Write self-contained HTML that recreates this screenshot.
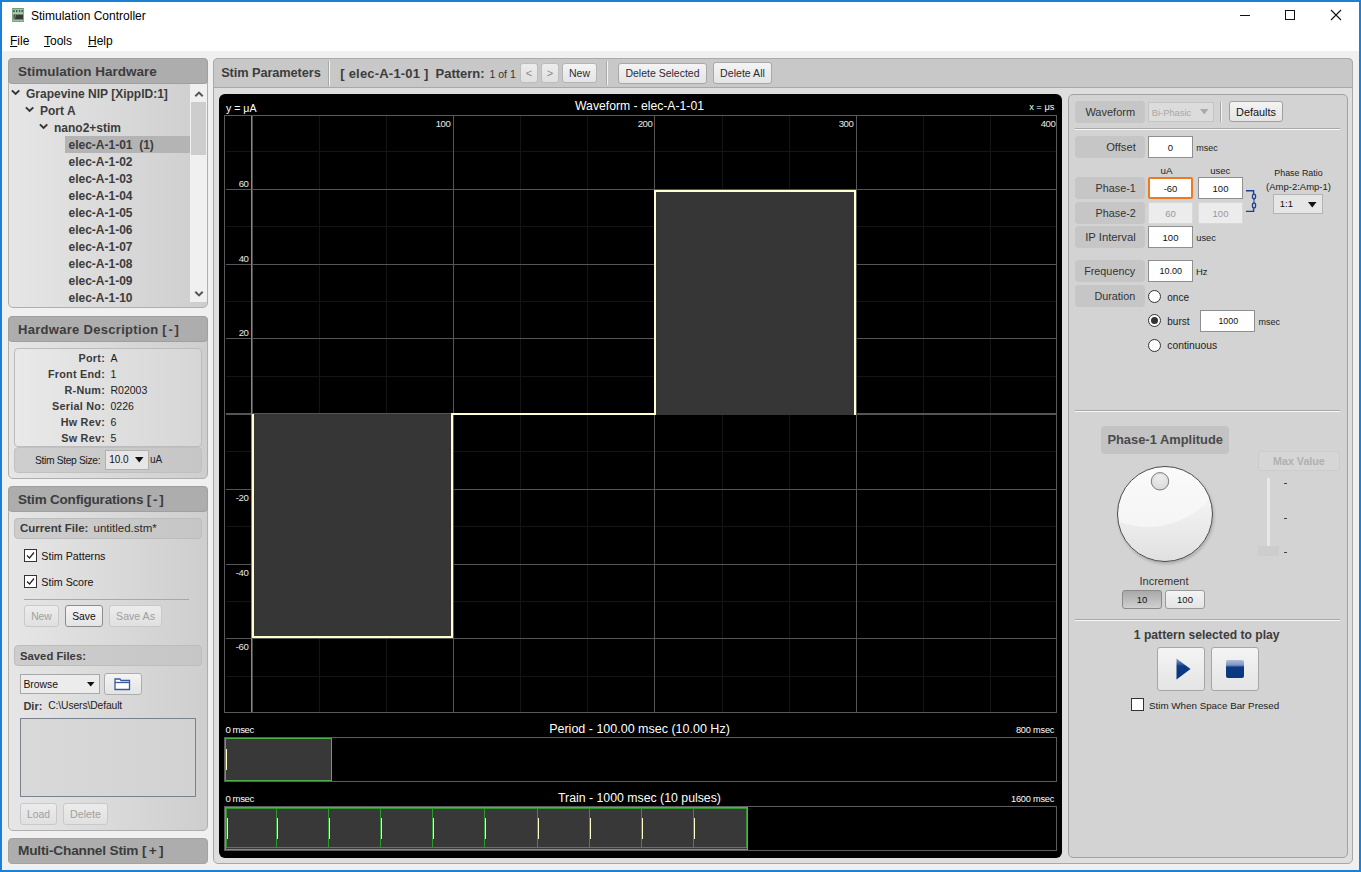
<!DOCTYPE html><html><head><meta charset="utf-8"><style>
*{box-sizing:border-box;margin:0;padding:0}
html,body{width:1361px;height:872px;overflow:hidden;background:#f0f0f0;font-family:"Liberation Sans",sans-serif;color:#222}
.a{position:absolute}
.t{position:absolute;white-space:pre;line-height:1}
</style></head><body>
<div class="a" style="left:2px;top:2px;width:1357px;height:49px;background:#fff"></div>
<svg class="a" style="left:12px;top:8px" width="12" height="14"><rect x="0" y="0" width="12" height="14" fill="#a6cfae"/><rect x="0" y="0" width="12" height="1.2" fill="#6f9a7a"/><rect x="0" y="12.8" width="12" height="1.2" fill="#7aa585"/><rect x="0" y="0" width="1" height="14" fill="#7fa98a"/><rect x="11" y="0" width="1" height="14" fill="#7fa98a"/><rect x="1.2" y="2" width="1.6" height="2.2" fill="#4a5a50"/><rect x="4" y="2" width="1.4" height="2.2" fill="#4a5a50"/><rect x="6.8" y="2" width="1.4" height="2.2" fill="#4a5a50"/><rect x="9.3" y="2" width="1.6" height="2.2" fill="#4a5a50"/><rect x="1.5" y="6.5" width="9.5" height="5" fill="#3a3a3a"/><path d="M2.3 11.5L3.6 7" stroke="#9a9a9a" stroke-width="0.8"/></svg>
<div class="t" style="left:31px;top:9.84px;font-size:12px;font-weight:400;color:#000;">Stimulation Controller</div>
<div class="a" style="left:1240px;top:15px;width:10px;height:1px;background:#111"></div>
<div class="a" style="left:1285px;top:10px;width:10px;height:10px;border:1px solid #111"></div>
<svg class="a" style="left:1330px;top:9px" width="12" height="12"><path d="M1 1L11 11M11 1L1 11" stroke="#111" stroke-width="1.1"/></svg>
<div class="t" style="left:10px;top:34.54px;font-size:12px;font-weight:400;color:#000;"><u>F</u>ile</div>
<div class="t" style="left:44px;top:34.54px;font-size:12px;font-weight:400;color:#000;"><u>T</u>ools</div>
<div class="t" style="left:88px;top:34.54px;font-size:12px;font-weight:400;color:#000;"><u>H</u>elp</div>
<div class="a" style="left:8px;top:58px;width:200px;height:250px;border:1px solid #afafaf;border-radius:5px;background:linear-gradient(90deg,#e6e6e6,#cecece);"></div>
<div class="a" style="left:8px;top:58px;width:200px;height:26px;background:#adadad;border:1px solid #a0a0a0;border-radius:4px;"></div>
<div class="t" style="left:18px;top:64.87px;font-size:13.5px;font-weight:700;color:#3c3c3c;">Stimulation Hardware</div>
<div class="a" style="left:190px;top:84px;width:17px;height:218px;background:#f0f0f0"></div>
<div class="a" style="left:191px;top:102px;width:15px;height:53px;background:#cdcdcd"></div>
<svg class="a" style="left:194px;top:90px" width="10" height="8"><path d="M1.3 6.3L5 2.6L8.7 6.3" stroke="#555" stroke-width="2" fill="none"/></svg>
<svg class="a" style="left:194px;top:290px" width="10" height="8"><path d="M1.3 1.7L5 5.4L8.7 1.7" stroke="#555" stroke-width="2" fill="none"/></svg>
<div class="a" style="left:65px;top:136px;width:125px;height:17px;background:#b4b4b4"></div>
<div class="t" style="left:26px;top:87.74px;font-size:12px;font-weight:700;color:#3c3c3c;">Grapevine NIP [XippID:1]</div>
<svg class="a" style="left:11px;top:89.30px" width="10" height="8"><path d="M0.9 1.3L4.6 5L8.3 1.3" stroke="#333" stroke-width="1.9" fill="none"/></svg>
<div class="t" style="left:40px;top:104.74px;font-size:12px;font-weight:700;color:#3c3c3c;">Port A</div>
<svg class="a" style="left:25px;top:106.30px" width="10" height="8"><path d="M0.9 1.3L4.6 5L8.3 1.3" stroke="#333" stroke-width="1.9" fill="none"/></svg>
<div class="t" style="left:54px;top:121.74px;font-size:12px;font-weight:700;color:#3c3c3c;">nano2+stim</div>
<svg class="a" style="left:39px;top:123.30px" width="10" height="8"><path d="M0.9 1.3L4.6 5L8.3 1.3" stroke="#333" stroke-width="1.9" fill="none"/></svg>
<div class="t" style="left:68.5px;top:138.74px;font-size:12px;font-weight:700;color:#3c3c3c;">elec-A-1-01  (1)</div>
<div class="t" style="left:68.5px;top:155.74px;font-size:12px;font-weight:700;color:#3c3c3c;">elec-A-1-02</div>
<div class="t" style="left:68.5px;top:172.74px;font-size:12px;font-weight:700;color:#3c3c3c;">elec-A-1-03</div>
<div class="t" style="left:68.5px;top:189.74px;font-size:12px;font-weight:700;color:#3c3c3c;">elec-A-1-04</div>
<div class="t" style="left:68.5px;top:206.74px;font-size:12px;font-weight:700;color:#3c3c3c;">elec-A-1-05</div>
<div class="t" style="left:68.5px;top:223.74px;font-size:12px;font-weight:700;color:#3c3c3c;">elec-A-1-06</div>
<div class="t" style="left:68.5px;top:240.74px;font-size:12px;font-weight:700;color:#3c3c3c;">elec-A-1-07</div>
<div class="t" style="left:68.5px;top:257.74px;font-size:12px;font-weight:700;color:#3c3c3c;">elec-A-1-08</div>
<div class="t" style="left:68.5px;top:274.74px;font-size:12px;font-weight:700;color:#3c3c3c;">elec-A-1-09</div>
<div class="t" style="left:68.5px;top:291.74px;font-size:12px;font-weight:700;color:#3c3c3c;">elec-A-1-10</div>
<div class="a" style="left:8px;top:316px;width:200px;height:163px;border:1px solid #afafaf;border-radius:5px;background:linear-gradient(90deg,#e6e6e6,#cecece);"></div>
<div class="a" style="left:8px;top:316px;width:200px;height:26px;background:#adadad;border:1px solid #a0a0a0;border-radius:4px;"></div>
<div class="t" style="left:18px;top:322.80px;font-size:13px;font-weight:700;color:#3c3c3c;letter-spacing:0.3px">Hardware Description <span style="letter-spacing:1.8px">[-</span>]</div>
<div class="a" style="left:14px;top:348px;width:188px;height:99px;border:1px solid #bcbcbc;border-radius:4px;background:linear-gradient(90deg,#e9e9e9,#d6d6d6)"></div>
<div class="a" style="left:14px;top:447px;width:188px;height:26px;border:1px solid #c0c0c0;border-radius:4px;background:linear-gradient(90deg,#cecece,#c6c6c6)"></div>
<div class="t" style="left:5px;width:100px;text-align:right;top:352.66px;font-size:10.8px;font-weight:700;color:#3a3a3a;letter-spacing:0.25px">Port:</div>
<div class="t" style="left:110.5px;top:352.91px;font-size:10.5px;font-weight:400;color:#1a1a1a;">A</div>
<div class="t" style="left:5px;width:100px;text-align:right;top:368.64px;font-size:10.8px;font-weight:700;color:#3a3a3a;letter-spacing:0.25px">Front End:</div>
<div class="t" style="left:110.5px;top:368.89px;font-size:10.5px;font-weight:400;color:#1a1a1a;">1</div>
<div class="t" style="left:5px;width:100px;text-align:right;top:384.62px;font-size:10.8px;font-weight:700;color:#3a3a3a;letter-spacing:0.25px">R-Num:</div>
<div class="t" style="left:110.5px;top:384.87px;font-size:10.5px;font-weight:400;color:#1a1a1a;">R02003</div>
<div class="t" style="left:5px;width:100px;text-align:right;top:400.60px;font-size:10.8px;font-weight:700;color:#3a3a3a;letter-spacing:0.25px">Serial No:</div>
<div class="t" style="left:110.5px;top:400.85px;font-size:10.5px;font-weight:400;color:#1a1a1a;">0226</div>
<div class="t" style="left:5px;width:100px;text-align:right;top:416.58px;font-size:10.8px;font-weight:700;color:#3a3a3a;letter-spacing:0.25px">Hw Rev:</div>
<div class="t" style="left:110.5px;top:416.83px;font-size:10.5px;font-weight:400;color:#1a1a1a;">6</div>
<div class="t" style="left:5px;width:100px;text-align:right;top:432.56px;font-size:10.8px;font-weight:700;color:#3a3a3a;letter-spacing:0.25px">Sw Rev:</div>
<div class="t" style="left:110.5px;top:432.81px;font-size:10.5px;font-weight:400;color:#1a1a1a;">5</div>
<div class="t" style="left:35px;top:455.88px;font-size:10.3px;font-weight:400;color:#1a1a1a;letter-spacing:-0.35px">Stim Step Size:</div>
<div class="a" style="left:105px;top:450px;width:44px;height:20px;background:#e6e6e6;border:1px solid #b0b0b0"></div>
<div class="t" style="left:109.2px;top:454.84px;font-size:10px;font-weight:400;color:#111;">10.0</div>
<svg class="a" style="left:135px;top:457px" width="9" height="6"><path d="M0 0H8.5L4.25 5.5Z" fill="#111"/></svg>
<div class="t" style="left:150px;top:455.04px;font-size:10px;font-weight:400;color:#222;">uA</div>
<div class="a" style="left:8px;top:486px;width:200px;height:345px;border:1px solid #afafaf;border-radius:5px;background:linear-gradient(90deg,#e6e6e6,#cecece);"></div>
<div class="a" style="left:8px;top:486px;width:200px;height:26px;background:#adadad;border:1px solid #a0a0a0;border-radius:4px;"></div>
<div class="t" style="left:18px;top:492.97px;font-size:13.5px;font-weight:700;color:#3c3c3c;letter-spacing:-0.2px">Stim Configurations <span style="letter-spacing:1.8px">[-</span>]</div>
<div class="a" style="left:14px;top:518px;width:188px;height:21px;border:1px solid #bdbdbd;border-radius:4px;background:linear-gradient(90deg,#cdcdcd,#c6c6c6)"></div>
<div class="t" style="left:20px;top:523.27px;font-size:11.5px;font-weight:700;color:#3a3a3a;">Current File:</div>
<div class="t" style="left:93.5px;top:523.27px;font-size:11.5px;font-weight:400;color:#2a2a2a;">untitled.stm*</div>
<div class="a" style="left:24px;top:549px;width:13px;height:13px;background:#fff;border:1px solid #333"></div>
<svg class="a" style="left:25px;top:550px" width="11" height="11"><path d="M2 5.5L4.5 8L9 2.5" stroke="#222" stroke-width="1.2" fill="none"/></svg>
<div class="t" style="left:41.3px;top:550.94px;font-size:10.7px;font-weight:400;color:#111;">Stim Patterns</div>
<div class="a" style="left:24px;top:575px;width:13px;height:13px;background:#fff;border:1px solid #333"></div>
<svg class="a" style="left:25px;top:576px" width="11" height="11"><path d="M2 5.5L4.5 8L9 2.5" stroke="#222" stroke-width="1.2" fill="none"/></svg>
<div class="t" style="left:41.3px;top:576.94px;font-size:10.7px;font-weight:400;color:#111;">Stim Score</div>
<div class="a" style="left:24px;top:599px;width:165px;height:1px;background:#a8a8a8"></div>
<div class="a" style="left:24px;top:605px;width:35px;height:22px;border:1px solid #c9c9c9;border-radius:3px;background:linear-gradient(#ececec,#e0e0e0);"></div>
<div class="t" style="left:21.5px;width:40px;text-align:center;top:611.68px;font-size:10.3px;font-weight:400;color:#a0a0a0;">New</div>
<div class="a" style="left:65px;top:605px;width:38px;height:22px;border:1px solid #adadad;border-radius:3px;background:linear-gradient(#f4f4f4,#e4e4e4);border-color:#8c8c8c"></div>
<div class="t" style="left:64.0px;width:40px;text-align:center;top:611.68px;font-size:10.3px;font-weight:400;color:#111;">Save</div>
<div class="a" style="left:109px;top:605px;width:53px;height:22px;border:1px solid #c9c9c9;border-radius:3px;background:linear-gradient(#ececec,#e0e0e0);"></div>
<div class="t" style="left:105.5px;width:60px;text-align:center;top:611.43px;font-size:10.6px;font-weight:400;color:#a0a0a0;">Save As</div>
<div class="a" style="left:14px;top:645px;width:188px;height:21px;border:1px solid #bdbdbd;border-radius:4px;background:linear-gradient(90deg,#cdcdcd,#c6c6c6)"></div>
<div class="t" style="left:20px;top:650.63px;font-size:11.3px;font-weight:700;color:#3a3a3a;">Saved Files:</div>
<div class="a" style="left:20px;top:674px;width:80px;height:20px;background:#ececec;border:1px solid #a8a8a8"></div>
<div class="t" style="left:23.4px;top:680.00px;font-size:10.4px;font-weight:400;color:#111;">Browse</div>
<svg class="a" style="left:87px;top:682px" width="8" height="5"><path d="M0 0H7.5L3.75 4.5Z" fill="#111"/></svg>
<div class="a" style="left:104px;top:673px;width:38px;height:22px;border:1px solid #adadad;border-radius:3px;background:linear-gradient(#f4f4f4,#e4e4e4);"></div>
<svg class="a" style="left:114px;top:677px" width="17" height="14"><path d="M1 2H6L7 3.5H15.5V12.5H1Z" fill="#fff" stroke="#3a5a9a" stroke-width="1.3"/><path d="M1 5.5H15.5" stroke="#3a5a9a" stroke-width="1.3"/></svg>
<div class="t" style="left:23.4px;top:700.69px;font-size:11px;font-weight:700;color:#3a3a3a;">Dir:</div>
<div class="t" style="left:48.2px;top:700.88px;font-size:10.3px;font-weight:400;color:#222;letter-spacing:-0.1px">C:\Users\Default</div>
<div class="a" style="left:20px;top:718px;width:176px;height:79px;border:1px solid #7a8290;background:linear-gradient(90deg,#d9d9d9,#d2d2d2)"></div>
<div class="a" style="left:20px;top:803px;width:37px;height:22px;border:1px solid #c9c9c9;border-radius:3px;background:linear-gradient(#ececec,#e0e0e0);"></div>
<div class="t" style="left:18.5px;width:40px;text-align:center;top:809.78px;font-size:10.3px;font-weight:400;color:#a0a0a0;">Load</div>
<div class="a" style="left:63px;top:803px;width:45px;height:22px;border:1px solid #c9c9c9;border-radius:3px;background:linear-gradient(#ececec,#e0e0e0);"></div>
<div class="t" style="left:60.5px;width:50px;text-align:center;top:809.44px;font-size:10.7px;font-weight:400;color:#a0a0a0;">Delete</div>
<div class="a" style="left:8px;top:838px;width:200px;height:26px;background:#adadad;border:1px solid #a3a3a3;border-radius:4px"></div>
<div class="t" style="left:18px;top:844.20px;font-size:13.7px;font-weight:700;color:#3c3c3c;letter-spacing:-0.2px">Multi-Channel Stim <span style="letter-spacing:2.2px">[+</span>]</div>
<div class="a" style="left:213px;top:58px;width:1140px;height:806px;background:#dedede;border:1px solid #a8a8a8;border-radius:5px"></div>
<div class="a" style="left:213px;top:58px;width:1140px;height:30px;background:#c8c8c8;border:1px solid #aaaaaa;border-bottom-color:#a8a8a8;border-radius:5px 5px 0 0"></div>
<div class="t" style="left:221.2px;top:67.46px;font-size:12.8px;font-weight:700;color:#3c3c3c;letter-spacing:-0.1px">Stim Parameters</div>
<div class="a" style="left:328px;top:61px;width:2px;height:25px;background:#f4f4f4;border-left:1px solid #a8a8a8"></div>
<div class="t" style="left:340.3px;top:67.30px;font-size:13px;font-weight:700;color:#3c3c3c;letter-spacing:0.2px">[ elec-A-1-01 ]</div>
<div class="t" style="left:435.5px;top:67.30px;font-size:13px;font-weight:700;color:#3c3c3c;">Pattern:</div>
<div class="t" style="left:489.5px;top:68.71px;font-size:10.5px;font-weight:400;color:#333;">1 of 1</div>
<div class="a" style="left:520px;top:63px;width:18px;height:20px;border:1px solid #c9c9c9;border-radius:3px;background:linear-gradient(#ececec,#e0e0e0);border-color:#bdbdbd"></div>
<div class="t" style="left:520.0px;width:18px;text-align:center;top:67.99px;font-size:11px;font-weight:400;color:#888;">&lt;</div>
<div class="a" style="left:541px;top:63px;width:18px;height:20px;border:1px solid #c9c9c9;border-radius:3px;background:linear-gradient(#ececec,#e0e0e0);border-color:#bdbdbd"></div>
<div class="t" style="left:541.0px;width:18px;text-align:center;top:67.99px;font-size:11px;font-weight:400;color:#888;">&gt;</div>
<div class="a" style="left:562px;top:63px;width:35px;height:20px;border:1px solid #adadad;border-radius:3px;background:linear-gradient(#f4f4f4,#e4e4e4);border-color:#b4b4b4"></div>
<div class="t" style="left:559.5px;width:40px;text-align:center;top:68.21px;font-size:10.5px;font-weight:400;color:#2a2a3a;">New</div>
<div class="a" style="left:606px;top:61px;width:2px;height:24px;background:#f4f4f4;border-left:1px solid #a8a8a8"></div>
<div class="a" style="left:618px;top:63px;width:89px;height:21px;border:1px solid #adadad;border-radius:3px;background:linear-gradient(#f4f4f4,#e4e4e4);border-color:#a8a8a8"></div>
<div class="t" style="left:612.5px;width:100px;text-align:center;top:68.21px;font-size:10.5px;font-weight:400;color:#2a2a3a;">Delete Selected</div>
<div class="a" style="left:713px;top:62px;width:59px;height:22px;border:1px solid #adadad;border-radius:3px;background:linear-gradient(#f4f4f4,#e4e4e4);border-color:#a8a8a8"></div>
<div class="t" style="left:707.5px;width:70px;text-align:center;top:68.13px;font-size:10.6px;font-weight:400;color:#2a2a3a;">Delete All</div>
<div class="a" style="left:219px;top:94px;width:843px;height:764px;background:#000;border-radius:6px"></div>
<div class="a" style="left:319px;top:116px;width:1px;height:596px;background:#141414"></div>
<div class="a" style="left:386px;top:116px;width:1px;height:596px;background:#141414"></div>
<div class="a" style="left:520px;top:116px;width:1px;height:596px;background:#141414"></div>
<div class="a" style="left:587px;top:116px;width:1px;height:596px;background:#141414"></div>
<div class="a" style="left:722px;top:116px;width:1px;height:596px;background:#141414"></div>
<div class="a" style="left:789px;top:116px;width:1px;height:596px;background:#141414"></div>
<div class="a" style="left:923px;top:116px;width:1px;height:596px;background:#141414"></div>
<div class="a" style="left:990px;top:116px;width:1px;height:596px;background:#141414"></div>
<div class="a" style="left:226px;top:151px;width:830px;height:1px;background:#141414"></div>
<div class="a" style="left:226px;top:226px;width:830px;height:1px;background:#141414"></div>
<div class="a" style="left:226px;top:301px;width:830px;height:1px;background:#141414"></div>
<div class="a" style="left:226px;top:376px;width:830px;height:1px;background:#141414"></div>
<div class="a" style="left:226px;top:451px;width:830px;height:1px;background:#141414"></div>
<div class="a" style="left:226px;top:526px;width:830px;height:1px;background:#141414"></div>
<div class="a" style="left:226px;top:601px;width:830px;height:1px;background:#141414"></div>
<div class="a" style="left:226px;top:676px;width:830px;height:1px;background:#141414"></div>
<div class="a" style="left:453px;top:116px;width:1px;height:596px;background:#555"></div>
<div class="a" style="left:654px;top:116px;width:1px;height:596px;background:#555"></div>
<div class="a" style="left:856px;top:116px;width:1px;height:596px;background:#555"></div>
<div class="a" style="left:226px;top:189px;width:830px;height:1px;background:#555"></div>
<div class="a" style="left:226px;top:264px;width:830px;height:1px;background:#555"></div>
<div class="a" style="left:226px;top:338px;width:830px;height:1px;background:#555"></div>
<div class="a" style="left:226px;top:489px;width:830px;height:1px;background:#555"></div>
<div class="a" style="left:226px;top:564px;width:830px;height:1px;background:#555"></div>
<div class="a" style="left:226px;top:638px;width:830px;height:1px;background:#555"></div>
<div class="a" style="left:226px;top:413px;width:830px;height:2px;background:#555"></div>
<div class="a" style="left:224px;top:115px;width:833px;height:598px;border:1px solid #5a5a5a"></div>
<div class="a" style="left:252px;top:116px;width:1px;height:596px;background:#4a4a4a"></div>
<div class="a" style="left:251px;top:116px;width:1px;height:596px;background:#4fb04f"></div>
<div class="a" style="left:252px;top:414px;width:201px;height:224px;background:#363636;border:2px solid #ffffd0;border-top:none"></div>
<div class="a" style="left:654px;top:190px;width:202px;height:225px;background:#363636;border:2px solid #ffffd0;border-bottom:none"></div>
<div class="a" style="left:451px;top:413px;width:205px;height:2px;background:#ffffd0"></div>
<div class="t" style="left:226px;top:102.53px;font-size:10.6px;font-weight:400;color:#fff;">y = μA</div>
<div class="t" style="left:994.4000000000001px;width:60px;text-align:right;top:103.13px;font-size:9.3px;font-weight:400;color:#fff;">x = μs</div>
<div class="t" style="left:489.5px;width:300px;text-align:center;top:100.47px;font-size:12.2px;font-weight:400;color:#fff;">Waveform - elec-A-1-01</div>
<div class="t" style="left:410.5px;width:40px;text-align:right;top:118.87px;font-size:9.6px;font-weight:400;color:#e8e8e8;letter-spacing:-0.4px">100</div>
<div class="t" style="left:612.5px;width:40px;text-align:right;top:118.87px;font-size:9.6px;font-weight:400;color:#e8e8e8;letter-spacing:-0.4px">200</div>
<div class="t" style="left:813.5px;width:40px;text-align:right;top:118.87px;font-size:9.6px;font-weight:400;color:#e8e8e8;letter-spacing:-0.4px">300</div>
<div class="t" style="left:1015.5px;width:40px;text-align:right;top:118.87px;font-size:9.6px;font-weight:400;color:#e8e8e8;letter-spacing:-0.4px">400</div>
<div class="t" style="left:208.5px;width:40px;text-align:right;top:179.07px;font-size:9.6px;font-weight:400;color:#e8e8e8;letter-spacing:-0.4px">60</div>
<div class="t" style="left:208.5px;width:40px;text-align:right;top:254.07px;font-size:9.6px;font-weight:400;color:#e8e8e8;letter-spacing:-0.4px">40</div>
<div class="t" style="left:208.5px;width:40px;text-align:right;top:328.07px;font-size:9.6px;font-weight:400;color:#e8e8e8;letter-spacing:-0.4px">20</div>
<div class="t" style="left:208.5px;width:40px;text-align:right;top:493.07px;font-size:9.6px;font-weight:400;color:#e8e8e8;letter-spacing:-0.4px">-20</div>
<div class="t" style="left:208.5px;width:40px;text-align:right;top:568.07px;font-size:9.6px;font-weight:400;color:#e8e8e8;letter-spacing:-0.4px">-40</div>
<div class="t" style="left:208.5px;width:40px;text-align:right;top:642.07px;font-size:9.6px;font-weight:400;color:#e8e8e8;letter-spacing:-0.4px">-60</div>
<div class="t" style="left:225.5px;top:725.37px;font-size:9.6px;font-weight:400;color:#fff;letter-spacing:-0.45px">0 msec</div>
<div class="t" style="left:974.2px;width:80px;text-align:right;top:725.71px;font-size:9.2px;font-weight:400;color:#fff;letter-spacing:-0.2px">800 msec</div>
<div class="t" style="left:489.5px;width:300px;text-align:center;top:723.22px;font-size:12.5px;font-weight:400;color:#fff;">Period - 100.00 msec (10.00 Hz)</div>
<div class="a" style="left:224px;top:737px;width:833px;height:45px;border:1px solid #5c5c5c"></div>
<div class="a" style="left:225px;top:738px;width:107px;height:43px;background:#383838;border:1px solid #4caf4c"></div>
<div class="a" style="left:226px;top:749px;width:1px;height:21px;background:#ffffc8"></div>
<div class="t" style="left:225.5px;top:794.47px;font-size:9.6px;font-weight:400;color:#fff;letter-spacing:-0.45px">0 msec</div>
<div class="t" style="left:974.2px;width:80px;text-align:right;top:795.01px;font-size:9.2px;font-weight:400;color:#fff;letter-spacing:-0.2px">1600 msec</div>
<div class="t" style="left:489.5px;width:300px;text-align:center;top:792.49px;font-size:12.3px;font-weight:400;color:#fff;">Train - 1000 msec (10 pulses)</div>
<div class="a" style="left:224px;top:806px;width:833px;height:45px;border:1px solid #5c5c5c"></div>
<div class="a" style="left:225px;top:807px;width:523px;height:43px;background:#383838;border:1px solid #8080d0"></div>
<div class="a" style="left:226px;top:808px;width:521px;height:40px;border:1px solid #2e9a2e"></div>
<div class="a" style="left:276px;top:808px;width:1px;height:40px;background:#2e9a2e"></div>
<div class="a" style="left:328px;top:808px;width:1px;height:40px;background:#2e9a2e"></div>
<div class="a" style="left:380px;top:808px;width:1px;height:40px;background:#2e9a2e"></div>
<div class="a" style="left:432px;top:808px;width:1px;height:40px;background:#2e9a2e"></div>
<div class="a" style="left:484px;top:808px;width:1px;height:40px;background:#2e9a2e"></div>
<div class="a" style="left:537px;top:808px;width:1px;height:40px;background:#2e9a2e"></div>
<div class="a" style="left:589px;top:808px;width:1px;height:40px;background:#2e9a2e"></div>
<div class="a" style="left:641px;top:808px;width:1px;height:40px;background:#2e9a2e"></div>
<div class="a" style="left:693px;top:808px;width:1px;height:40px;background:#2e9a2e"></div>
<div class="a" style="left:227px;top:818px;width:1px;height:21px;background:#ffffc8"></div>
<div class="a" style="left:277px;top:818px;width:1px;height:21px;background:#ffffc8"></div>
<div class="a" style="left:329px;top:818px;width:1px;height:21px;background:#ffffc8"></div>
<div class="a" style="left:381px;top:818px;width:1px;height:21px;background:#ffffc8"></div>
<div class="a" style="left:433px;top:818px;width:1px;height:21px;background:#ffffc8"></div>
<div class="a" style="left:485px;top:818px;width:1px;height:21px;background:#ffffc8"></div>
<div class="a" style="left:538px;top:818px;width:1px;height:21px;background:#ffffc8"></div>
<div class="a" style="left:590px;top:818px;width:1px;height:21px;background:#ffffc8"></div>
<div class="a" style="left:642px;top:818px;width:1px;height:21px;background:#ffffc8"></div>
<div class="a" style="left:694px;top:818px;width:1px;height:21px;background:#ffffc8"></div>
<div class="a" style="left:1068px;top:94px;width:280px;height:764px;background:#d3d3d3;border:1px solid #a2a2a2;border-radius:5px"></div>
<div class="a" style="left:1075px;top:101px;width:70px;height:22px;background:#c6c6c6;border-radius:4px;"></div>
<div class="t" style="left:1085.4px;top:106.99px;font-size:11px;font-weight:400;color:#333;">Waveform</div>
<div class="a" style="left:1148px;top:102px;width:66px;height:20px;background:#dcdcdc;border:1px solid #c4c4c4"></div>
<div class="t" style="left:1151.7px;top:108.04px;font-size:9.4px;font-weight:400;color:#a8a8a8;">Bi-Phasic</div>
<svg class="a" style="left:1200px;top:109px" width="9" height="6"><path d="M0 0H8.5L4.25 5.5Z" fill="#aaa"/></svg>
<div class="a" style="left:1220px;top:102px;width:2px;height:20px;background:#f0f0f0;border-left:1px solid #a8a8a8"></div>
<div class="a" style="left:1229px;top:101px;width:54px;height:21px;border:1px solid #adadad;border-radius:3px;background:linear-gradient(#f4f4f4,#e4e4e4);border-color:#a0a0a0"></div>
<div class="t" style="left:1226.0px;width:60px;text-align:center;top:107.07px;font-size:10.9px;font-weight:400;color:#111;">Defaults</div>
<div class="a" style="left:1075px;top:128px;width:265px;height:1px;background:#a8a8a8"></div>
<div class="a" style="left:1075px;top:129px;width:265px;height:1px;background:#f8f8f8"></div>
<div class="a" style="left:1075px;top:136px;width:70px;height:22px;background:#c6c6c6;border-radius:4px;"></div>
<div class="t" style="left:1055.8px;width:80px;text-align:right;top:141.82px;font-size:11.2px;font-weight:400;color:#333;">Offset</div>
<div class="a" style="left:1148px;top:136px;width:45px;height:22px;background:#fff;border:1px solid #8f8f8f;"></div>
<div class="t" style="left:1150.5px;width:40px;text-align:center;top:142.76px;font-size:9.5px;font-weight:400;color:#111;">0</div>
<div class="t" style="left:1196.3px;top:143.68px;font-size:9px;font-weight:400;color:#222;">msec</div>
<div class="t" style="left:1151.5px;width:30px;text-align:center;top:165.60px;font-size:9.8px;font-weight:400;color:#222;">uA</div>
<div class="t" style="left:1200.2px;width:40px;text-align:center;top:165.86px;font-size:9.5px;font-weight:400;color:#222;">usec</div>
<div class="a" style="left:1075px;top:177px;width:70px;height:22px;background:#c6c6c6;border-radius:4px;"></div>
<div class="t" style="left:1055.8px;width:80px;text-align:right;top:183.26px;font-size:10.8px;font-weight:400;color:#333;">Phase-1</div>
<div class="a" style="left:1148px;top:177px;width:45px;height:22px;background:#fff;border:2px solid #f07820;border-radius:2px"></div>
<div class="t" style="left:1150.5px;width:40px;text-align:center;top:183.86px;font-size:9.5px;font-weight:400;color:#111;">-60</div>
<div class="a" style="left:1198px;top:177px;width:45px;height:22px;background:#fff;border:1px solid #8f8f8f;"></div>
<div class="t" style="left:1200.5px;width:40px;text-align:center;top:183.86px;font-size:9.5px;font-weight:400;color:#111;">100</div>
<div class="a" style="left:1075px;top:202px;width:70px;height:22px;background:#c6c6c6;border-radius:4px;"></div>
<div class="t" style="left:1055.8px;width:80px;text-align:right;top:208.46px;font-size:10.8px;font-weight:400;color:#333;">Phase-2</div>
<div class="a" style="left:1148px;top:202px;width:45px;height:22px;background:#ececec;border:1px solid #d8d8d8"></div>
<div class="t" style="left:1150.5px;width:40px;text-align:center;top:209.16px;font-size:9.5px;font-weight:400;color:#999;">60</div>
<div class="a" style="left:1198px;top:202px;width:45px;height:22px;background:#ececec;border:1px solid #d8d8d8"></div>
<div class="t" style="left:1200.5px;width:40px;text-align:center;top:209.16px;font-size:9.5px;font-weight:400;color:#999;">100</div>
<svg class="a" style="left:1244px;top:188px" width="14" height="26"><path d="M2 2.7H9.6V6M9.6 20.5V23.4H2" stroke="#1a3f8f" stroke-width="1.4" fill="none"/><ellipse cx="10" cy="8.6" rx="1.6" ry="2.4" stroke="#1a3f8f" stroke-width="1.3" fill="none"/><ellipse cx="10" cy="17.4" rx="1.6" ry="2.6" stroke="#1a3f8f" stroke-width="1.3" fill="none"/><path d="M10 11V14.8" stroke="#1a3f8f" stroke-width="1"/></svg>
<div class="t" style="left:1258.5px;width:80px;text-align:center;top:168.97px;font-size:8.9px;font-weight:400;color:#222;">Phase Ratio</div>
<div class="t" style="left:1258.5px;width:80px;text-align:center;top:181.76px;font-size:9.5px;font-weight:400;color:#222;">(Amp-2:Amp-1)</div>
<div class="a" style="left:1273px;top:194px;width:50px;height:20px;background:#e6e6e6;border:1px solid #b4b4b4"></div>
<div class="t" style="left:1279.8px;top:198.96px;font-size:9.5px;font-weight:400;color:#111;">1:1</div>
<svg class="a" style="left:1308px;top:202px" width="9" height="6"><path d="M0 0H8.5L4.25 5.5Z" fill="#111"/></svg>
<div class="a" style="left:1075px;top:226px;width:70px;height:22px;background:#c6c6c6;border-radius:4px;"></div>
<div class="t" style="left:1055.8px;width:80px;text-align:right;top:231.93px;font-size:11.3px;font-weight:400;color:#333;">IP Interval</div>
<div class="a" style="left:1148px;top:226px;width:45px;height:22px;background:#fff;border:1px solid #8f8f8f;"></div>
<div class="t" style="left:1150.5px;width:40px;text-align:center;top:232.96px;font-size:9.5px;font-weight:400;color:#111;">100</div>
<div class="t" style="left:1196.3px;top:233.63px;font-size:9.3px;font-weight:400;color:#222;">usec</div>
<div class="a" style="left:1075px;top:260px;width:70px;height:22px;background:#c6c6c6;border-radius:4px;"></div>
<div class="t" style="left:1055.2px;width:80px;text-align:right;top:265.76px;font-size:10.8px;font-weight:400;color:#333;">Frequency</div>
<div class="a" style="left:1148px;top:260px;width:45px;height:22px;background:#fff;border:1px solid #8f8f8f;"></div>
<div class="t" style="left:1150.8px;width:40px;text-align:center;top:266.98px;font-size:9px;font-weight:400;color:#111;">10.00</div>
<div class="t" style="left:1196px;top:266.96px;font-size:9.5px;font-weight:400;color:#222;">Hz</div>
<div class="a" style="left:1075px;top:285px;width:70px;height:22px;background:#c6c6c6;border-radius:4px;"></div>
<div class="t" style="left:1055.2px;width:80px;text-align:right;top:290.76px;font-size:10.8px;font-weight:400;color:#333;">Duration</div>
<div class="a" style="left:1148.0px;top:290.0px;width:13px;height:13px;border-radius:50%;background:#fff;border:1px solid #333"></div>
<div class="t" style="left:1167.3px;top:293.34px;font-size:10px;font-weight:400;color:#222;">once</div>
<div class="a" style="left:1148.0px;top:314.4px;width:13px;height:13px;border-radius:50%;background:#fff;border:1px solid #333"></div><div class="a" style="left:1151.0px;top:317.4px;width:7px;height:7px;border-radius:50%;background:#333"></div>
<div class="t" style="left:1167.3px;top:317.14px;font-size:10px;font-weight:400;color:#222;">burst</div>
<div class="a" style="left:1200px;top:310px;width:55px;height:22px;background:#fff;border:1px solid #8f8f8f;"></div>
<div class="t" style="left:1208.3px;width:40px;text-align:center;top:317.07px;font-size:8.9px;font-weight:400;color:#111;">1000</div>
<div class="t" style="left:1258.5px;top:318.18px;font-size:9px;font-weight:400;color:#222;">msec</div>
<div class="a" style="left:1148.0px;top:338.7px;width:13px;height:13px;border-radius:50%;background:#fff;border:1px solid #333"></div>
<div class="t" style="left:1167.3px;top:341.28px;font-size:10.3px;font-weight:400;color:#222;">continuous</div>
<div class="a" style="left:1075px;top:410px;width:265px;height:1px;background:#a8a8a8"></div>
<div class="a" style="left:1075px;top:411px;width:265px;height:1px;background:#f8f8f8"></div>
<div class="a" style="left:1101px;top:426px;width:128px;height:28px;background:#c6c6c6;border-radius:4px;background:#c3c3c3"></div>
<div class="t" style="left:1107.4px;top:433.98px;font-size:12.9px;font-weight:700;color:#4a4a4a;">Phase-1 Amplitude</div>
<div class="a" style="left:1258px;top:451px;width:82px;height:20px;border:1px solid #cccccc;border-radius:3px;background:#d6d6d6"></div>
<div class="t" style="left:1273.1px;top:455.84px;font-size:10.7px;font-weight:700;color:#b0b0b0;">Max Value</div>
<div class="a" style="left:1117px;top:466px;width:96px;height:96px;border-radius:50%;box-shadow:1px 2px 3px rgba(0,0,0,0.18)"></div>
<svg class="a" style="left:1116px;top:465px" width="98" height="98"><defs><clipPath id="kc"><circle cx="49" cy="49" r="47.5"/></clipPath><linearGradient id="kg" x1="0" y1="0" x2="0" y2="1"><stop offset="0.4" stop-color="#f2f2f2"/><stop offset="1" stop-color="#e0e0e0"/></linearGradient><linearGradient id="kh" x1="0" y1="0" x2="0" y2="1"><stop offset="0.3" stop-color="#ffffff"/><stop offset="1" stop-color="#f5f5f5"/></linearGradient><radialGradient id="ks" cx="0.5" cy="0.3" r="0.7"><stop offset="0" stop-color="#ececec"/><stop offset="1" stop-color="#dadada"/></radialGradient></defs><g clip-path="url(#kc)"><rect x="0" y="0" width="98" height="98" fill="url(#kg)"/><circle cx="32" cy="-20" r="82" fill="url(#kh)"/></g><circle cx="49" cy="49" r="47.5" fill="none" stroke="#4a4a4a" stroke-width="1"/><circle cx="44" cy="16.3" r="8.7" fill="url(#ks)" stroke="#7a7a7a" stroke-width="1"/></svg>
<div class="a" style="left:1267px;top:478px;width:3px;height:68px;background:#e8e8e8"></div>
<div class="a" style="left:1258px;top:546px;width:21px;height:10px;background:#cdcdcd"></div>
<div class="a" style="left:1284px;top:483px;width:3px;height:1px;background:#444"></div>
<div class="a" style="left:1284px;top:518px;width:3px;height:1px;background:#444"></div>
<div class="a" style="left:1284px;top:552px;width:3px;height:1px;background:#444"></div>
<div class="t" style="left:1124.0px;width:80px;text-align:center;top:575.69px;font-size:11px;font-weight:400;color:#333;">Increment</div>
<div class="a" style="left:1122px;top:590px;width:40px;height:19px;border:1px solid #8a8a8a;border-radius:3px;background:linear-gradient(#a8a8a8,#d0d0d0)"></div>
<div class="t" style="left:1127.0px;width:30px;text-align:center;top:594.56px;font-size:9.5px;font-weight:400;color:#111;">10</div>
<div class="a" style="left:1165px;top:590px;width:40px;height:19px;border:1px solid #adadad;border-radius:3px;background:linear-gradient(#f4f4f4,#e4e4e4);border-color:#9a9a9a"></div>
<div class="t" style="left:1170.0px;width:30px;text-align:center;top:594.56px;font-size:9.5px;font-weight:400;color:#111;">100</div>
<div class="a" style="left:1075px;top:619px;width:265px;height:1px;background:#a8a8a8"></div>
<div class="a" style="left:1075px;top:620px;width:265px;height:1px;background:#f8f8f8"></div>
<div class="t" style="left:1106.7px;width:200px;text-align:center;top:629.22px;font-size:12.15px;font-weight:700;color:#3c3c3c;">1 pattern selected to play</div>
<div class="a" style="left:1157px;top:647px;width:48px;height:44px;border:1px solid #adadad;border-radius:3px;background:linear-gradient(#f4f4f4,#e4e4e4);border-color:#a6a6a6"></div>
<svg class="a" style="left:1176px;top:658px" width="15" height="22"><defs><linearGradient id="pg" x1="0" y1="0" x2="0" y2="1"><stop offset="0" stop-color="#8aa0cc"/><stop offset="0.3" stop-color="#2a5098"/><stop offset="0.36" stop-color="#0c3a84"/><stop offset="1" stop-color="#0a3680"/></linearGradient></defs><path d="M0.5 0.5L14.5 11L0.5 21.5Z" fill="url(#pg)"/></svg>
<div class="a" style="left:1211px;top:647px;width:48px;height:44px;border:1px solid #adadad;border-radius:3px;background:linear-gradient(#f4f4f4,#e4e4e4);border-color:#a6a6a6"></div>
<div class="a" style="left:1226px;top:660px;width:18px;height:18px;background:linear-gradient(#aebcd8 0%,#7f96c4 28%,#0c3a84 40%,#0a3680 100%);border-radius:2px"></div>
<div class="a" style="left:1131px;top:698px;width:13px;height:13px;background:#fff;border:1px solid #333"></div>
<div class="t" style="left:1149px;top:701.20px;font-size:9.8px;font-weight:400;color:#222;">Stim When Space Bar Presed</div>
<div class="a" style="left:0;top:0;width:1361px;height:872px;border:2px solid #1a80d8"></div></body></html>
